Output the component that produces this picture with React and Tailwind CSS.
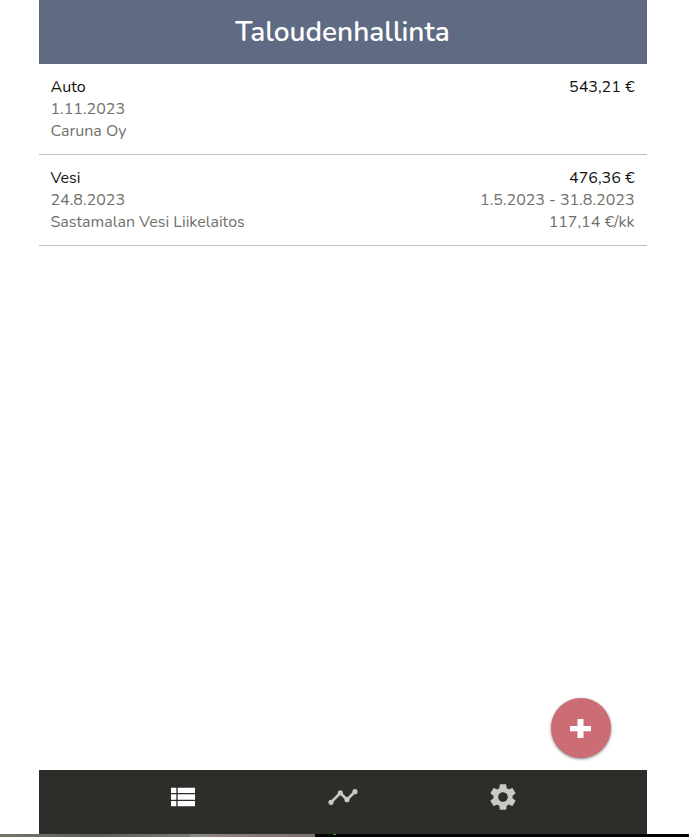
import { MdTimeline, MdSettings } from 'react-icons/md';

const entries = [
  {
    left: ['Auto', '1.11.2023', 'Caruna Oy'],
    right: ['543,21 €'],
  },
  {
    left: ['Vesi', '24.8.2023', 'Sastamalan Vesi Liikelaitos'],
    right: ['476,36 €', '1.5.2023 - 31.8.2023', '117,14 €/kk'],
  },
];

function Lines({ lines, className }) {
  return (
    <div className={`flex flex-col ${className}`}>
      {lines.map((line, i) => (
        <span key={line} className={i === 0 ? 'text-[#111111]' : 'text-[#70706b]'}>
          {line}
        </span>
      ))}
    </div>
  );
}

export default function App() {
  return (
    <div className="relative flex h-[837px] w-full flex-col overflow-hidden bg-white font-['Nunito','Lato',sans-serif]">
      <div className="ml-[39px] flex h-[834px] w-[608px] flex-col">
        <header className="flex h-16 shrink-0 items-center justify-center bg-[#5f6b82] pr-px">
          <h1 className="text-[28px] font-semibold leading-none text-white">Taloudenhallinta</h1>
        </header>
        <main className="flex-1">
          {entries.map((entry) => (
            <div
              key={entry.left[0]}
              className="flex h-[91px] justify-between border-b border-[#c0c0c0] pl-[11.5px] pr-[12.5px] pt-3 text-base leading-[22px]"
            >
              <Lines lines={entry.left} className="items-start" />
              <Lines lines={entry.right} className="items-end" />
            </div>
          ))}
        </main>
        <nav className="flex h-16 shrink-0 justify-center gap-32 bg-[#2d2e2a] pt-[11px] text-[#c8c8c4]">
          <svg className="size-8 text-white" viewBox="0 0 24 24" fill="currentColor">
            <path d="M3 14h4v-4H3v4zm0 5h4v-4H3v4zM3 9h4V5H3v4zm5 5h13v-4H8v4zm0 5h13v-4H8v4zM8 5v4h13V5H8z" />
          </svg>
          <MdTimeline className="size-8" />
          <MdSettings className="size-8" />
        </nav>
      </div>
      <div className="flex h-[3px] w-full shrink-0">
        <div className="h-full w-[190px] bg-linear-to-r from-[#77746c] via-[#5c5b55] to-[#777a73]" />
        <div className="h-full w-[125px] bg-linear-to-r from-[#8a8a84] via-[#8b7773] to-[#7b706a]" />
        <div className="h-full flex-1 bg-black pl-[18px]">
          <div className="h-px w-[3px] bg-[#20a820]" />
        </div>
      </div>
      <button
        type="button"
        aria-label="+"
        className="absolute left-[551px] top-[698px] flex size-[60px] items-center justify-center rounded-full bg-[#cc6c75] pr-px shadow-[0_1px_3px_rgba(0,0,0,0.5)]"
      >
        <svg className="h-[19px] w-[21px]" viewBox="0 0 21 19" fill="white">
          <path d="M7.5 0h6v7H21v5.2h-7.5V19h-6v-6.8H0V7h7.5z" />
        </svg>
      </button>
    </div>
  );
}
